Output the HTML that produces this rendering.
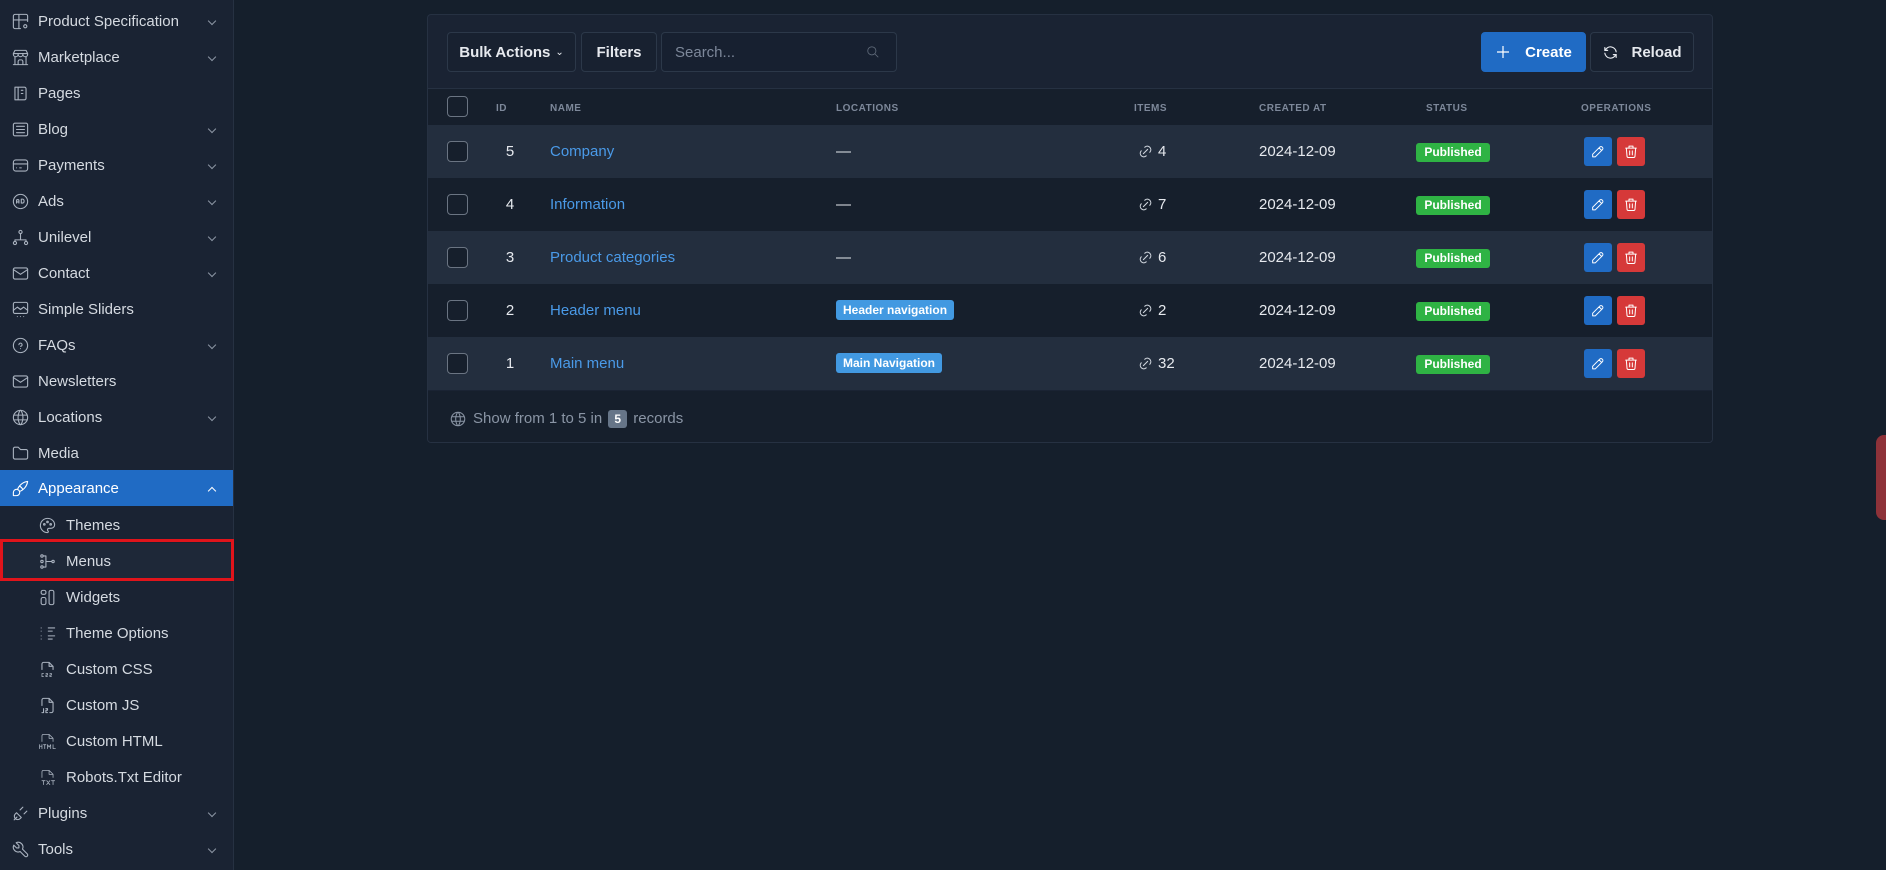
<!DOCTYPE html>
<html><head><meta charset="utf-8"><style>
*{box-sizing:border-box;margin:0;padding:0}
body{width:1886px;height:870px;background:#151f2c;font-family:"Liberation Sans",sans-serif;color:#e6e9ee;position:relative;overflow:hidden}
.sb{position:absolute;left:0;top:0;width:234px;height:870px;background:#1a2333;border-right:1px solid #263142}
.it{position:absolute;left:0;width:233px;height:36px;display:flex;align-items:center;font-size:15px;color:#d5dae1}
.it svg{position:absolute;left:11px;top:9px;width:19px;height:19px;fill:none;stroke:#a9b2bf;stroke-width:1.4;stroke-linecap:round;stroke-linejoin:round}
.it span{position:absolute;left:38px}
.it .ch{position:absolute;left:209px;top:15px;width:6px;height:6px;border-right:1.3px solid #8c96a4;border-bottom:1.3px solid #8c96a4;transform:rotate(45deg)}
.sub svg{left:38px}
.sub span{left:66px}
.act{background:#206bc4;color:#fff}
.act svg{stroke:#fff}
.card{position:absolute;left:427px;top:14px;width:1286px;height:429px;background:#1a2333;border:1px solid #263142;border-radius:4px;overflow:hidden}
.btn{position:absolute;top:17px;height:40px;border:1px solid #2c3849;border-radius:4px;background:#182130;font-size:15px;font-weight:bold;color:#e6e9ee;display:flex;align-items:center;justify-content:center}
.hdr{position:absolute;left:0;top:73px;width:1286px;height:38px;background:#161f2c;border-top:1px solid #263142;font-size:10px;font-weight:bold;color:#7d889a;letter-spacing:.5px}
.hdr div{position:absolute;top:14px}
.row{position:absolute;left:0;width:1286px;height:53px;font-size:15px}
.row>*{position:absolute}
.odd{background:#232e3e}.even{background:#161f2c}
.cb{left:19px;width:21px;height:21px;border:1.5px solid #6a7482;border-radius:4px;top:16px;background:#161f2c}
.nm{left:122px;top:18px;color:#4a9ae8}
.idc{left:70px;width:24px;text-align:center;top:18px}
.dash{left:408px;top:18px}
.loc{left:408px;top:16px;height:20px;background:#4299e1;color:#fff;font-size:12px;font-weight:bold;padding:3px 7px;border-radius:3px}
.lk{left:709px;top:18px;width:17px;height:17px;fill:none;stroke:#cfd5dd;stroke-width:1.5;stroke-linecap:round}
.num{left:730px;top:18px}
.dt{left:831px;top:18px}
.pub{left:988px;top:18px;width:74px;height:19px;background:#2fb344;color:#fff;font-size:12px;font-weight:bold;border-radius:3px;text-align:center;line-height:19px}
.ed{left:1156px;top:12px;width:28px;height:29px;background:#206bc4;border-radius:3px}
.dl{left:1189px;top:12px;width:28px;height:29px;background:#d63939;border-radius:3px}
.ed svg,.dl svg{position:absolute;left:6px;top:6px;width:16px;height:17px;fill:none;stroke:#fff;stroke-width:1.5;stroke-linecap:round;stroke-linejoin:round}
</style></head><body>
<div class="sb">
<div class="it" style="top:3px"><svg viewBox="0 0 24 24"><path d="M12 21H5a2 2 0 0 1-2-2V5a2 2 0 0 1 2-2h14a2 2 0 0 1 2 2v7M3 10h18M10 3v18"/><circle cx="18" cy="18" r="2"/></svg><span>Product Specification</span><i class="ch"></i></div>
<div class="it" style="top:39px"><svg viewBox="0 0 24 24"><path d="M3 21h18M3 7v1a3 3 0 0 0 6 0V7m0 1a3 3 0 0 0 6 0V7m0 1a3 3 0 0 0 6 0V7H3l2-4h14l2 4M5 21V10.8M19 21V10.8M9 21v-4a2 2 0 0 1 2-2h2a2 2 0 0 1 2 2v4"/></svg><span>Marketplace</span><i class="ch"></i></div>
<div class="it" style="top:75px"><svg viewBox="0 0 24 24"><path d="M5 4h12a2 2 0 0 1 2 2v12a2 2 0 0 1-2 2H5zM9 4v16M13 8h2M13 12h2"/></svg><span>Pages</span></div>
<div class="it" style="top:111px"><svg viewBox="0 0 24 24"><rect x="3" y="4" width="18" height="16" rx="2"/><path d="M7 8h10M7 12h10M7 16h10"/></svg><span>Blog</span><i class="ch"></i></div>
<div class="it" style="top:147px"><svg viewBox="0 0 24 24"><rect x="3" y="5" width="18" height="14" rx="3"/><path d="M3 10h18M7 15h.01M11 15h2"/></svg><span>Payments</span><i class="ch"></i></div>
<div class="it" style="top:183px"><svg viewBox="0 0 24 24"><circle cx="12" cy="12" r="9"/><path d="M7 14v-3a1.5 1.5 0 0 1 3 0v3M7 12.5h3M13 9v5h1.5a2 2 0 0 0 2-2v-1a2 2 0 0 0-2-2z"/></svg><span>Ads</span><i class="ch"></i></div>
<div class="it" style="top:219px"><svg viewBox="0 0 24 24"><circle cx="12" cy="5" r="2"/><circle cx="5" cy="19" r="2"/><circle cx="19" cy="19" r="2"/><path d="M12 7v5M5 17v-2h14v2M12 12v3"/></svg><span>Unilevel</span><i class="ch"></i></div>
<div class="it" style="top:255px"><svg viewBox="0 0 24 24"><rect x="3" y="5" width="18" height="14" rx="2"/><path d="M3 7l9 6 9-6"/></svg><span>Contact</span><i class="ch"></i></div>
<div class="it" style="top:291px"><svg viewBox="0 0 24 24"><rect x="3" y="3" width="18" height="14" rx="2"/><path d="M3 13l5-4 4 3 4-3 5 4M8 21h.01M12 21h.01M16 21h.01"/></svg><span>Simple Sliders</span></div>
<div class="it" style="top:327px"><svg viewBox="0 0 24 24"><circle cx="12" cy="12" r="9"/><path d="M12 16v.01M12 13a2 2 0 1 0-2-2"/></svg><span>FAQs</span><i class="ch"></i></div>
<div class="it" style="top:363px"><svg viewBox="0 0 24 24"><rect x="3" y="5" width="18" height="14" rx="2"/><path d="M3 7l9 6 9-6"/></svg><span>Newsletters</span></div>
<div class="it" style="top:399px"><svg viewBox="0 0 24 24"><circle cx="12" cy="12" r="9"/><path d="M3.6 9h16.8M3.6 15h16.8M11.5 3a17 17 0 0 0 0 18M12.5 3a17 17 0 0 1 0 18"/></svg><span>Locations</span><i class="ch"></i></div>
<div class="it" style="top:435px"><svg viewBox="0 0 24 24"><path d="M5 4h4l3 3h7a2 2 0 0 1 2 2v8a2 2 0 0 1-2 2H5a2 2 0 0 1-2-2V6a2 2 0 0 1 2-2"/></svg><span>Media</span></div>
<div class="it act" style="top:470px"><svg viewBox="0 0 24 24"><path d="M3 21v-4a4 4 0 1 1 4 4h-4M21 3A16 16 0 0 0 8.2 13.2M21 3a16 16 0 0 1-10.2 12.8M10.6 9a9 9 0 0 1 4.4 4.4"/></svg><span>Appearance</span><i class="ch" style="transform:rotate(225deg);top:18px;border-color:#fff"></i></div>
<div class="it sub" style="top:507px"><svg viewBox="0 0 24 24"><path d="M12 21a9 9 0 0 1 0-18c4.970 0 9 3.6 9 8a4.5 4.5 0 0 1-4.5 4.5H14a2 2 0 0 0-1 3.75A1.3 1.3 0 0 1 12 21"/><circle cx="8" cy="10.5" r="1"/><circle cx="12" cy="7.5" r="1"/><circle cx="16" cy="10.5" r="1"/></svg><span>Themes</span></div>
<div class="it sub" style="top:543px;background:#1e2838"><svg viewBox="0 0 24 24"><circle cx="5" cy="5" r="1.5"/><circle cx="5" cy="19" r="1.5"/><circle cx="5" cy="12" r="1.5"/><circle cx="19" cy="12" r="1.5"/><path d="M7 5h3v14H7M10 12h7"/></svg><span>Menus</span></div>
<div style="position:absolute;left:0;top:539px;width:234px;height:42px;border:3px solid #e0141b"></div>
<div class="it sub" style="top:579px"><svg viewBox="0 0 24 24"><rect x="4" y="3" width="6" height="5" rx="2"/><rect x="4" y="12" width="6" height="9" rx="2"/><rect x="14" y="3" width="6" height="18" rx="2"/></svg><span>Widgets</span></div>
<div class="it sub" style="top:615px"><svg viewBox="0 0 24 24"><path d="M13 5h8M13 9h5M13 15h8M13 19h5M4 5h.01M4 9h.01M4 15h.01M4 19h.01"/></svg><span>Theme Options</span></div>
<div class="it sub" style="top:651px"><svg viewBox="0 0 24 24"><path d="M5 12V5a2 2 0 0 1 2-2h7l5 5v4M14 3v5h5"/><path d="M5 17h2M5 21h2M5 17v4M10 17h2v2h-2v2h2M15 17h2v2h-2v2h2" stroke-width="1"/></svg><span>Custom CSS</span></div>
<div class="it sub" style="top:687px"><svg viewBox="0 0 24 24"><path d="M5 12V5a2 2 0 0 1 2-2h7l5 5v11a2 2 0 0 1-2 2h-2M14 3v5h5M5 21h2v-5M10 16h2v2h-2v3h2"/></svg><span>Custom JS</span></div>
<div class="it sub" style="top:723px"><svg viewBox="0 0 24 24"><path d="M5 12V5a2 2 0 0 1 2-2h7l5 5v4M14 3v5h5M2 16v5M2 18h3M5 16v5M7 16h3M8.5 16v5M12 21v-5l2 3 2-3v5M19 16v5h3" stroke-width="1"/></svg><span>Custom HTML</span></div>
<div class="it sub" style="top:759px"><svg viewBox="0 0 24 24"><path d="M5 12V5a2 2 0 0 1 2-2h7l5 5v4M14 3v5h5M5 16h4M7 16v5M11 16l4 5M15 16l-4 5M17 16h4M19 16v5" stroke-width="1"/></svg><span>Robots.Txt Editor</span></div>
<div class="it" style="top:795px"><svg viewBox="0 0 24 24"><path d="M4 20l3.5-3.5M15 4l-3.5 3.5M20 9l-3.5 3.5M7 11l6 6-1.5 1.5a4.2 4.2 0 0 1-6-6z"/></svg><span>Plugins</span><i class="ch"></i></div>
<div class="it" style="top:831px"><svg viewBox="0 0 24 24"><path d="M7 10h3V7L6.5 3.5a6 6 0 0 1 8 8l6 6a2 2 0 0 1-3 3l-6-6a6 6 0 0 1-8-8z"/></svg><span>Tools</span><i class="ch"></i></div>
</div>

<div class="card">
<div class="btn" style="left:19px;width:129px">Bulk Actions <span style="font-size:10px;margin-left:5px;font-weight:normal">&#8964;</span></div>
<div class="btn" style="left:153px;width:76px">Filters</div>
<div class="btn" style="left:233px;width:236px;justify-content:flex-start;padding-left:13px;font-weight:normal;color:#7d889a;background:#172030">Search...
<svg style="position:absolute;right:16px;top:12px;width:14px;height:14px;fill:none;stroke:#5f6a79;stroke-width:1.5" viewBox="0 0 24 24"><circle cx="10" cy="10" r="7"/><path d="M21 21l-6-6"/></svg></div>
<div class="btn" style="left:1053px;width:105px;background:#206bc4;border-color:#206bc4;color:#fff;font-weight:bold">
<svg style="width:16px;height:16px;margin-right:14px;stroke:#fff;stroke-width:1.8;fill:none" viewBox="0 0 24 24"><path d="M12 3v18M3 12h18"/></svg>Create</div>
<div class="btn" style="left:1162px;width:104px">
<svg style="width:17px;height:17px;margin-right:12px;stroke:#e6e9ee;stroke-width:1.6;fill:none;stroke-linecap:round" viewBox="0 0 24 24"><path d="M20 11A8.1 8.1 0 0 0 4.5 9M4 5v4h4M4 13a8.1 8.1 0 0 0 15.5 2M20 19v-4h-4"/></svg>Reload</div>

<div class="hdr">
<div style="left:19px;top:7px;width:21px;height:21px;border:1.5px solid #6a7482;border-radius:4px"></div>
<div style="left:68px">ID</div><div style="left:122px">NAME</div><div style="left:408px">LOCATIONS</div><div style="left:706px">ITEMS</div><div style="left:831px">CREATED AT</div><div style="left:998px">STATUS</div><div style="left:1153px">OPERATIONS</div>
</div>

<div class="row odd" style="top:110px"><i class="cb"></i><span class="idc">5</span><span class="nm">Company</span><span class="dash">—</span><svg class="lk" viewBox="0 0 24 24"><path d="M9 15l6-6M11 6l.5-.5a5 5 0 0 1 7 7l-.5.5M13 18l-.4.5a5 5 0 0 1-7-7L6 11"/></svg><span class="num">4</span><span class="dt">2024-12-09</span><span class="pub">Published</span><i class="ed"><svg viewBox="0 0 24 24"><path d="M4 20h4L18.5 9.5a2.8 2.8 0 0 0-4-4L4 16zM13.5 6.5l4 4"/></svg></i><i class="dl"><svg viewBox="0 0 24 24"><path d="M4 7h16M10 11v6M14 11v6M5 7l1 12a2 2 0 0 0 2 2h8a2 2 0 0 0 2-2l1-12M9 7V4h6v3"/></svg></i></div>
<div class="row even" style="top:163px"><i class="cb"></i><span class="idc">4</span><span class="nm">Information</span><span class="dash">—</span><svg class="lk" viewBox="0 0 24 24"><path d="M9 15l6-6M11 6l.5-.5a5 5 0 0 1 7 7l-.5.5M13 18l-.4.5a5 5 0 0 1-7-7L6 11"/></svg><span class="num">7</span><span class="dt">2024-12-09</span><span class="pub">Published</span><i class="ed"><svg viewBox="0 0 24 24"><path d="M4 20h4L18.5 9.5a2.8 2.8 0 0 0-4-4L4 16zM13.5 6.5l4 4"/></svg></i><i class="dl"><svg viewBox="0 0 24 24"><path d="M4 7h16M10 11v6M14 11v6M5 7l1 12a2 2 0 0 0 2 2h8a2 2 0 0 0 2-2l1-12M9 7V4h6v3"/></svg></i></div>
<div class="row odd" style="top:216px"><i class="cb"></i><span class="idc">3</span><span class="nm">Product categories</span><span class="dash">—</span><svg class="lk" viewBox="0 0 24 24"><path d="M9 15l6-6M11 6l.5-.5a5 5 0 0 1 7 7l-.5.5M13 18l-.4.5a5 5 0 0 1-7-7L6 11"/></svg><span class="num">6</span><span class="dt">2024-12-09</span><span class="pub">Published</span><i class="ed"><svg viewBox="0 0 24 24"><path d="M4 20h4L18.5 9.5a2.8 2.8 0 0 0-4-4L4 16zM13.5 6.5l4 4"/></svg></i><i class="dl"><svg viewBox="0 0 24 24"><path d="M4 7h16M10 11v6M14 11v6M5 7l1 12a2 2 0 0 0 2 2h8a2 2 0 0 0 2-2l1-12M9 7V4h6v3"/></svg></i></div>
<div class="row even" style="top:269px"><i class="cb"></i><span class="idc">2</span><span class="nm">Header menu</span><span class="loc">Header navigation</span><svg class="lk" viewBox="0 0 24 24"><path d="M9 15l6-6M11 6l.5-.5a5 5 0 0 1 7 7l-.5.5M13 18l-.4.5a5 5 0 0 1-7-7L6 11"/></svg><span class="num">2</span><span class="dt">2024-12-09</span><span class="pub">Published</span><i class="ed"><svg viewBox="0 0 24 24"><path d="M4 20h4L18.5 9.5a2.8 2.8 0 0 0-4-4L4 16zM13.5 6.5l4 4"/></svg></i><i class="dl"><svg viewBox="0 0 24 24"><path d="M4 7h16M10 11v6M14 11v6M5 7l1 12a2 2 0 0 0 2 2h8a2 2 0 0 0 2-2l1-12M9 7V4h6v3"/></svg></i></div>
<div class="row odd" style="top:322px"><i class="cb"></i><span class="idc">1</span><span class="nm">Main menu</span><span class="loc">Main Navigation</span><svg class="lk" viewBox="0 0 24 24"><path d="M9 15l6-6M11 6l.5-.5a5 5 0 0 1 7 7l-.5.5M13 18l-.4.5a5 5 0 0 1-7-7L6 11"/></svg><span class="num">32</span><span class="dt">2024-12-09</span><span class="pub">Published</span><i class="ed"><svg viewBox="0 0 24 24"><path d="M4 20h4L18.5 9.5a2.8 2.8 0 0 0-4-4L4 16zM13.5 6.5l4 4"/></svg></i><i class="dl"><svg viewBox="0 0 24 24"><path d="M4 7h16M10 11v6M14 11v6M5 7l1 12a2 2 0 0 0 2 2h8a2 2 0 0 0 2-2l1-12M9 7V4h6v3"/></svg></i></div>

<div style="position:absolute;left:0;top:376px;width:1286px;height:53px;background:#161f2c;font-size:15px;color:#8a95a5">
<svg style="position:absolute;left:21px;top:19px;width:18px;height:18px;fill:none;stroke:#8a95a5;stroke-width:1.4" viewBox="0 0 24 24"><circle cx="12" cy="12" r="9"/><path d="M3.6 9h16.8M3.6 15h16.8M11.5 3a17 17 0 0 0 0 18M12.5 3a17 17 0 0 1 0 18"/></svg>
<span style="position:absolute;left:45px;top:19px">Show from 1 to 5 in <b style="display:inline-block;background:#667588;color:#fff;font-size:12px;padding:2px 6px;border-radius:3px;margin:0 2px">5</b> records</span>
</div>
</div>
<div style="position:absolute;left:1876px;top:435px;width:20px;height:85px;background:#8e3239;border-radius:8px"></div>
</body></html>
